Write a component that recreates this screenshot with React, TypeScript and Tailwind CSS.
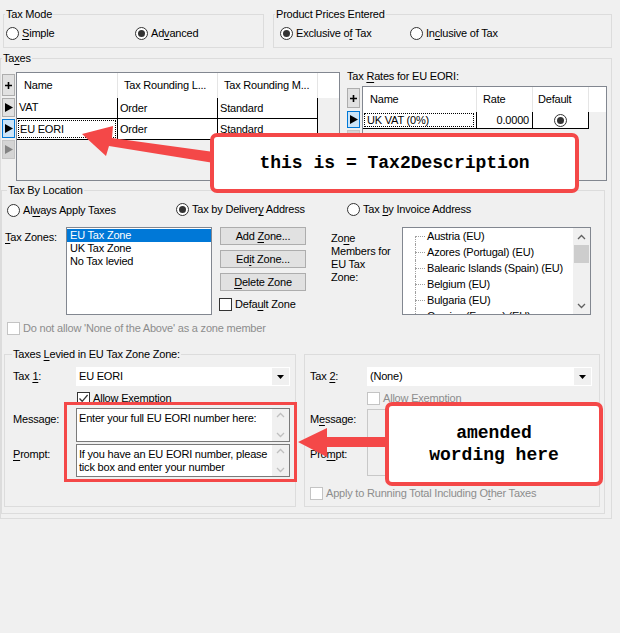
import React from 'react'

const U = ({children}: {children: React.ReactNode}) => (
  <span className="underline underline-offset-[2px] decoration-1">{children}</span>
)

function Radio({label, checked, className = ''}: {label: React.ReactNode; checked?: boolean; className?: string}) {
  return (
    <div className={`flex items-center gap-[3px] ${className}`}>
      <span className="flex h-[13px] w-[13px] shrink-0 items-center justify-center rounded-full border border-[#333] bg-white">
        {checked && <span className="h-[7px] w-[7px] rounded-full bg-[#333]" />}
      </span>
      <span>{label}</span>
    </div>
  )
}

function Check({label, checked, disabled, className = ''}: {label: React.ReactNode; checked?: boolean; disabled?: boolean; className?: string}) {
  return (
    <div className={`flex items-center gap-[3px] ${className}`}>
      <span
        className={`flex h-[13px] w-[13px] shrink-0 items-center justify-center border bg-white ${
          disabled ? 'border-[#c4c4c4]' : 'border-[#333]'
        }`}
      >
        {checked && (
          <svg width="11" height="11" viewBox="0 0 11 11">
            <path d="M1.5 5.5 L4.2 8.3 L9.6 2" stroke="#333" strokeWidth="1.3" fill="none" />
          </svg>
        )}
      </span>
      <span className={disabled ? 'text-[#8d8d8d]' : ''}>{label}</span>
    </div>
  )
}

function RowBtn({kind, className = ''}: {kind: 'plus' | 'arrow' | 'sel' | 'dis'; className?: string}) {
  const box =
    kind === 'sel'
      ? 'bg-[#cce4f7] border-[#0078d7]'
      : kind === 'dis'
        ? 'bg-[#d4d4d4] border-[#c4c4c4]'
        : 'bg-[#e1e1e1] border-[#adadad]'
  return (
    <div className={`flex w-[13px] items-center justify-center border ${box} ${className}`}>
      {kind === 'plus' ? (
        <svg width="7" height="7" viewBox="0 0 7 7">
          <path d="M3.5 0 V7 M0 3.5 H7" stroke="#000" strokeWidth="1.6" />
        </svg>
      ) : (
        <svg width="8" height="9" viewBox="0 0 8 9">
          <path d="M0 0 L8 4.5 L0 9 Z" fill={kind === 'dis' ? '#838383' : '#000'} />
        </svg>
      )}
    </div>
  )
}

function Chevron({up, color = '#606060'}: {up?: boolean; color?: string}) {
  return (
    <svg width="9" height="6" viewBox="0 0 9 6">
      <path d={up ? 'M1 5 L4.5 1.5 L8 5' : 'M1 1 L4.5 4.5 L8 1'} stroke={color} strokeWidth="1.3" fill="none" />
    </svg>
  )
}

function Combo({value, className = ''}: {value: string; className?: string}) {
  return (
    <div className={`flex h-[19px] bg-white ${className}`}>
      <span className="flex-1 pl-[3px] leading-[19px]">{value}</span>
      <span className="my-[1px] mr-[1px] flex w-[17px] items-center justify-center bg-[#f0f0f0]">
        <svg width="7" height="4" viewBox="0 0 7 4">
          <path d="M0 0 H7 L3.5 4 Z" fill="#000" />
        </svg>
      </span>
    </div>
  )
}

function TextBox({text, className = ''}: {text: string; className?: string}) {
  return (
    <div className={`flex border border-[#7a7a7a] bg-white ${className}`}>
      <p className="flex-1 px-[2px] pt-[3px] leading-[13px]">{text}</p>
      <div className="flex w-[17px] flex-col justify-between bg-[#f0f0f0] py-[3px]">
        <span className="flex justify-center"><Chevron up color="#bfbfbf" /></span>
        <span className="flex justify-center"><Chevron color="#bfbfbf" /></span>
      </div>
    </div>
  )
}

const zoneMembers = [
  'Austria (EU)',
  'Azores (Portugal) (EU)',
  'Balearic Islands (Spain) (EU)',
  'Belgium (EU)',
  'Bulgaria (EU)',
  'Corsica (France) (EU)',
]

export default function App() {
  return (
    <div className="relative h-[633px] w-[620px] overflow-hidden bg-[#f0f0f0] font-['Liberation_Sans',Arial,sans-serif] text-[11px] leading-[13px] tracking-[-0.2px] text-black">
      {/* Tax mode + prices */}
      <div className="flex pt-[8px]">
        <fieldset className="ml-[3px] h-[40px] w-[261px] border border-[#dcdcdc]">
          <legend className="ml-[1px] px-[1px]">Tax Mode</legend>
          <div className="flex pl-[2px] pt-[6px]">
            <Radio className="w-[129px]" label={<><U>S</U>imple</>} />
            <Radio checked label={<>Ad<U>v</U>anced</>} />
          </div>
        </fieldset>
        <fieldset className="ml-[9px] h-[40px] w-[339px] border border-[#dcdcdc]">
          <legend className="ml-[1px] px-[1px]">Product Prices Entered</legend>
          <div className="flex pl-[6px] pt-[6px]">
            <Radio checked className="w-[130px]" label={<>Exclusive o<U>f</U> Tax</>} />
            <Radio label={<>In<U>c</U>lusive of Tax</>} />
          </div>
        </fieldset>
      </div>

      {/* Taxes */}
      <fieldset className="mt-[4px] h-[467px] w-[612px] border border-[#dcdcdc]">
        <legend className="ml-[1px] px-[1px]">Ta<U>x</U>es</legend>
        <div className="flex pt-[4px]">
          {/* taxes grid */}
          <div className="mt-[3px] flex">
            <div className="ml-[1px] mt-[2px] flex flex-col">
              <RowBtn kind="plus" className="h-[22px]" />
              <RowBtn kind="arrow" className="mt-[2px] h-[19px]" />
              <RowBtn kind="sel" className="mt-[2px] h-[19px]" />
              <RowBtn kind="dis" className="mt-[2px] h-[19px]" />
            </div>
            <div className="ml-[1px] flex h-[109px] w-[324px] flex-col border border-[#828790] bg-[#f0f0f0]">
              <div className="flex h-[25px] items-center bg-white">
                <div className="w-[101px] border-r border-[#e5e5e5] pl-[7px] leading-[25px]">Name</div>
                <div className="w-[100px] border-r border-[#e5e5e5] pl-[6px] leading-[25px]">Tax Rounding L...</div>
                <div className="w-[100px] border-r border-[#e5e5e5] pl-[6px] leading-[25px]">Tax Rounding M...</div>
              </div>
              {[
                ['VAT', 'Order', 'Standard'],
                ['EU EORI', 'Order', 'Standard'],
              ].map((r, i) => (
                <div key={i} className="flex h-[21px] w-[301px] border-b border-black bg-white">
                  <div className="w-[101px] border-r border-black p-[1px]">
                    <div className={`h-full pl-[1px] leading-[17px] ${i === 1 ? 'border border-dotted border-black' : ''}`}>{r[0]}</div>
                  </div>
                  <div className="w-[100px] border-r border-black pl-[2px] leading-[20px]">{r[1]}</div>
                  <div className="w-[100px] border-r border-black pl-[2px] leading-[20px]">{r[2]}</div>
                </div>
              ))}
            </div>
          </div>

          {/* tax rates grid */}
          <div className="ml-[7px] w-[260px]">
            <div className="h-[14px] leading-[14px]">Tax <U>R</U>ates for EU EORI:</div>
            <div className="mt-[3px] flex">
              <div className="mt-[2px] flex flex-col">
                <RowBtn kind="plus" className="h-[20px]" />
                <RowBtn kind="sel" className="mt-[3px] h-[17px]" />
                <RowBtn kind="dis" className="mt-[2px] h-[17px]" />
              </div>
              <div className="ml-[2px] flex h-[95px] w-[245px] flex-col border border-[#828790] bg-[#f0f0f0]">
                <div className="flex h-[25px] bg-white">
                  <div className="w-[114px] border-r border-[#e5e5e5] pl-[7px] leading-[25px]">Name</div>
                  <div className="w-[56px] border-r border-[#e5e5e5] pl-[6px] leading-[25px]">Rate</div>
                  <div className="w-[56px] border-r border-[#e5e5e5] pl-[5px] leading-[25px]">Default</div>
                </div>
                <div className="flex h-[17px] w-[226px] border-b border-black bg-white">
                  <div className="w-[114px] border-r border-black p-[1px] pr-[2px]">
                    <div className="h-full border border-dotted border-black pl-[2px] leading-[13px]">UK VAT (0%)</div>
                  </div>
                  <div className="w-[56px] border-r border-black pr-[3px] text-right leading-[16px]">0.0000</div>
                  <div className="flex w-[56px] items-center justify-center border-r border-black">
                    <span className="flex h-[13px] w-[13px] items-center justify-center rounded-full border border-[#333] bg-white">
                      <span className="h-[7px] w-[7px] rounded-full bg-[#333]" />
                    </span>
                  </div>
                </div>
              </div>
            </div>
          </div>
        </div>

        {/* Tax by location */}
        <fieldset className="mt-[3px] h-[330px] w-[604px] border border-[#dcdcdc]">
          <legend className="ml-[5px] px-[1px]">Tax By Location</legend>
          <div className="flex pl-[5px] pt-[5px]">
            <Radio className="mt-[2px] w-[169px]" label={<>Al<U>w</U>ays Apply Taxes</>} />
            <Radio checked className="w-[171px]" label={<>Tax by Deliver<U>y</U> Address</>} />
            <Radio label={<>Tax <U>b</U>y Invoice Address</>} />
          </div>

          <div className="mt-[10px] flex">
            <div className="w-[64px] pl-[3px] pt-[4px]"><U>T</U>ax Zones:</div>
            <div className="h-[88px] w-[146px] border border-[#828790] bg-white pt-[1px]">
              <div className="h-[13px] bg-[#0078d7] pl-[3px] text-white">EU Tax Zone</div>
              <div className="h-[13px] pl-[3px]">UK Tax Zone</div>
              <div className="h-[13px] pl-[3px]">No Tax levied</div>
            </div>
            <div className="ml-[8px] flex w-[86px] flex-col">
              <button className="h-[18px] border border-[#adadad] bg-[#e1e1e1]">Add <U>Z</U>one...</button>
              <button className="mt-[5px] h-[18px] border border-[#adadad] bg-[#e1e1e1]">Ed<U>i</U>t Zone...</button>
              <button className="mt-[5px] h-[18px] border border-[#adadad] bg-[#e1e1e1]"><U>D</U>elete Zone</button>
              <Check className="ml-[-1px] mt-[7px]" label={<>Defa<U>u</U>lt Zone</>} />
            </div>
            <div className="ml-[25px] w-[71px] pt-[5px]">
              Zo<U>n</U>e<br />Members for<br />EU Tax<br />Zone:
            </div>
            <div className="flex h-[88px] w-[189px] overflow-hidden border border-[#828790] bg-white">
              <div className="ml-[12px] flex-1 overflow-hidden">
                {zoneMembers.map((m, i) => (
                  <div key={m} className="flex h-[16px] items-center">
                    <span className="flex h-full w-[10px] flex-col">
                      <span className={`h-1/2 ${i > 0 ? 'border-l' : ''} border-dotted border-[#a0a0a0]`} />
                      <span className="h-1/2 border-l border-t border-dotted border-[#a0a0a0]" />
                    </span>
                    <span className="ml-[2px] whitespace-nowrap">{m}</span>
                  </div>
                ))}
              </div>
              <div className="flex w-[17px] flex-col bg-[#f0f0f0]">
                <div className="flex h-[17px] items-center justify-center"><Chevron up /></div>
                <div className="mx-[1px] h-[18px] bg-[#cdcdcd]" />
                <div className="flex-1" />
                <div className="flex h-[17px] items-center justify-center"><Chevron /></div>
              </div>
            </div>
          </div>

          <Check disabled className="ml-[5px] mt-[7px]" label="Do not allow 'None of the Above' as a zone member" />

          <div className="mt-[13px] flex">
            <fieldset className="ml-[2px] h-[159px] w-[292px] border border-[#dcdcdc]">
              <legend className="ml-[7px] px-[1px]">Taxes <U>L</U>evied in EU Tax Zone Zone:</legend>
              <div className="mt-[6px] flex items-center">
                <div className="w-[71px] pl-[8px]">Tax <U>1</U>:</div>
                <Combo value="EU EORI" className="w-[214px]" />
              </div>
              <Check checked className="ml-[72px] mt-[6px]" label="Allow Exemption" />
              <div className="mt-[3px] flex">
                <div className="w-[71px] pl-[8px] pt-[5px]">Message:</div>
                <TextBox className="h-[34px] w-[214px]" text="Enter your full EU EORI number here:" />
              </div>
              <div className="mt-[2px] flex">
                <div className="w-[71px] pl-[8px] pt-[4px]"><U>P</U>rompt:</div>
                <TextBox className="h-[33px] w-[214px]" text="If you have an EU EORI number, please tick box and enter your number" />
              </div>
            </fieldset>

            <div className="ml-[8px] mt-[6px] h-[153px] w-[296px] border border-[#dcdcdc]">
              <div className="mt-[12px] flex items-center">
                <div className="w-[62px] pl-[5px]">Tax <U>2</U>:</div>
                <Combo value="(None)" className="w-[225px]" />
              </div>
              <Check disabled className="ml-[62px] mt-[6px]" label="Allow Exemption" />
              <div className="mt-[4px] flex">
                <div className="w-[62px] pl-[5px]">
                  <div className="pt-[4px]">M<U>e</U>ssage:</div>
                  <div className="mt-[22px]">Pro<U>m</U>pt:</div>
                </div>
                <div className="h-[67px] w-[225px] border border-[#c8c8c8] bg-[#f0f0f0]" />
              </div>
              <Check disabled className="ml-[5px] mt-[11px]" label={<>Apply to Running Total Including O<U>t</U>her Taxes</>} />
            </div>
          </div>
        </fieldset>
      </fieldset>

      {/* annotations */}
      <div className="absolute left-[64px] top-[402px] h-[80px] w-[233px] border-[3px] border-[#f44848]" />
      <svg className="pointer-events-none absolute left-0 top-0" width="620" height="633">
        <polygon points="82,134 113,126 112,138 214,152 214,163 109,146 106,156" fill="#f44848" />
        <polygon points="298,442 327,428 327,437 389,437 389,447 327,447 327,457" fill="#f44848" />
      </svg>
      <div className="absolute left-[210px] top-[133px] flex h-[60px] w-[369px] items-center justify-center rounded-[7px] border-[4px] border-[#f44848] bg-white font-['Liberation_Mono',monospace] text-[18px] font-bold tracking-normal">
        this is = Tax2Description
      </div>
      <div className="absolute left-[385px] top-[402px] flex h-[84px] w-[218px] items-center justify-center rounded-[7px] border-[4px] border-[#f44848] bg-white text-center font-['Liberation_Mono',monospace] text-[18px] font-bold leading-[22px] tracking-normal">
        amended
        <br />
        wording here
      </div>
    </div>
  )
}
